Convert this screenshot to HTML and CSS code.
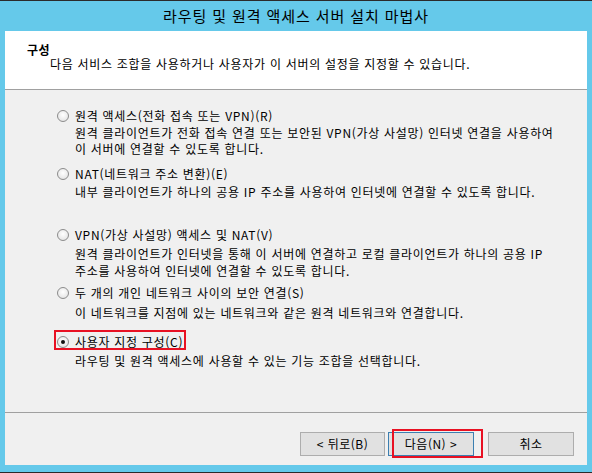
FILE: index.html
```html
<!DOCTYPE html>
<html lang="ko">
<head>
<meta charset="utf-8">
<title>라우팅 및 원격 액세스 서버 설치 마법사</title>
<link rel="stylesheet" href="styles.css">
</head>
<body>
<div class="window">
  <div class="titlebar">라우팅 및 원격 액세스 서버 설치 마법사</div>
  <div class="client">
    <div class="header">
      <div class="h-title">구성</div>
      <div class="h-sub">다음 서비스 조합을 사용하거나 사용자가 이 서버의 설정을 지정할 수 있습니다.</div>
    </div>
    <div class="content">
      <div class="opt opt1">
        <div class="row"><span class="radio"></span><span class="label">원격 액세스(전화 접속 또는 VPN)(R)</span></div>
        <div class="desc d1">원격 클라이언트가 전화 접속 연결 또는 보안된 VPN(가상 사설망) 인터넷 연결을 사용하여<br>이 서버에 연결할 수 있도록 합니다.</div>
      </div>
      <div class="opt opt2">
        <div class="row"><span class="radio"></span><span class="label">NAT(네트워크 주소 변환)(E)</span></div>
        <div class="desc d2">내부 클라이언트가 하나의 공용 IP 주소를 사용하여 인터넷에 연결할 수 있도록 합니다.</div>
      </div>
      <div class="opt opt3">
        <div class="row"><span class="radio"></span><span class="label">VPN(가상 사설망) 액세스 및 NAT(V)</span></div>
        <div class="desc d3">원격 클라이언트가 인터넷을 통해 이 서버에 연결하고 로컬 클라이언트가 하나의 공용 IP<br>주소를 사용하여 인터넷에 연결할 수 있도록 합니다.</div>
      </div>
      <div class="opt opt4">
        <div class="row"><span class="radio"></span><span class="label">두 개의 개인 네트워크 사이의 보안 연결(S)</span></div>
        <div class="desc d4">이 네트워크를 지점에 있는 네트워크와 같은 원격 네트워크와 연결합니다.</div>
      </div>
      <div class="opt opt5">
        <div class="row marked"><span class="radio checked"></span><span class="label">사용자 지정 구성(C)</span></div>
        <div class="desc d5">라우팅 및 원격 액세스에 사용할 수 있는 기능 조합을 선택합니다.</div>
      </div>
    </div>
    <div class="footer">
      <button class="btn btn-back">&lt; 뒤로(B)</button>
      <button class="btn btn-next">다음(N) &gt;</button>
      <button class="btn btn-cancel">취소</button>
    </div>
  </div>
</div>
</body>
</html>
```

FILE: styles.css
```css
* { box-sizing: border-box; }
html, body { margin: 0; padding: 0; }
body {
  width: 592px;
  height: 473px;
  overflow: hidden;
  font-family: "Noto Sans CJK KR", "Noto Sans", sans-serif;
  font-size: 12px;
  letter-spacing: 0.7px;
  color: #000;
}
.window {
  width: 592px;
  height: 473px;
  background: #65c9ea;
  border-top: 1px solid #2b2b2b;
  border-bottom: 1px solid #2b2b2b;
  display: flex;
  flex-direction: column;
}
.titlebar {
  height: 30px;
  line-height: 30px;
  text-align: center;
  font-size: 15px;
  letter-spacing: 0.9px;
  color: #000;
}
.client {
  margin: 0 5px 7px 5px;
  flex: 1;
  display: flex;
  flex-direction: column;
  background: #f0f0f0;
}
.header {
  height: 59px;
  background: #fff;
  border-bottom: 1px solid #a0a0a0;
  padding: 12px 0 0 22px;
}
.h-title {
  font-weight: bold;
  line-height: 14px;
  letter-spacing: 0.4px;
}
.h-sub {
  line-height: 14px;
  padding-left: 23px;
}
.content {
  flex: 1;
  border-bottom: 1px solid #a0a0a0;
  padding: 0 0 0 52px;
}
.opt { line-height: 16px; }
.row {
  display: flex;
  width: fit-content;
  align-items: center;
  height: 16px;
  line-height: 16px;
  position: relative;
}
.radio {
  width: 12px;
  height: 12px;
  border-radius: 50%;
  border: 1px solid #8c8c8c;
  background: radial-gradient(circle at 50% 40%, #ffffff 0%, #e8e8e8 70%, #d6d6d6 100%);
  margin-right: 6px;
  position: relative;
  flex: none;
}
.radio.checked::after {
  content: "";
  position: absolute;
  left: 3px;
  top: 3px;
  width: 4px;
  height: 4px;
  border-radius: 50%;
  background: #111;
}
.desc {
  padding-left: 18px;
  line-height: 16px;
}
.opt1 { margin-top: 18px; }
.d1 { margin-top: 1px; }
.opt2 { margin-top: 9px; }
.d2 { margin-top: 2px; }
.opt3 { margin-top: 27px; }
.d3 { margin-top: 2px; line-height: 17px; }
.opt4 { margin-top: 6px; }
.d4 { margin-top: 4px; }
.opt5 { margin-top: 13px; }
.d5 { margin-top: 3px; }
.marked::after {
  content: "";
  position: absolute;
  left: -3px;
  top: -4px;
  right: -3px;
  bottom: 0;
  border: 2px solid #e81123;
}
.footer {
  height: 52px;
  display: flex;
  align-items: flex-start;
  padding: 19px 13px 0 0;
  justify-content: flex-end;
}
.btn {
  height: 24px;
  width: 86px;
  font-family: inherit;
  font-size: 12px;
  letter-spacing: 0.5px;
  color: #000;
  background: #e1e1e1;
  border: 1px solid #adadad;
  padding: 0;
  margin: 0;
  line-height: 22px;
}
.btn-back { width: 85px; margin-right: 3px; }
.btn-next {
  border-color: #3c7fb1;
  position: relative;
  margin-right: 14px;
}
.btn-next::after {
  content: "";
  position: absolute;
  left: 3px;
  top: -4px;
  width: 87px;
  height: 25px;
  border: 2px solid #e81123;
}
```
